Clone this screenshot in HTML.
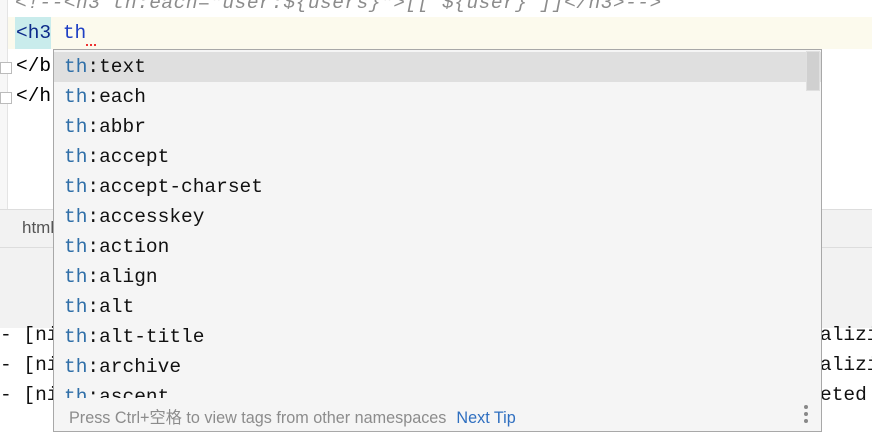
<!DOCTYPE html>
<html><head><style>
body{margin:0;width:872px;height:440px;overflow:hidden;background:#fff;position:relative;font-family:"Liberation Mono",monospace;font-size:19.5px}
.abs{position:absolute;white-space:pre}
.fold{position:absolute;left:0;width:12px;height:12px;border:1px solid #bbb;background:#fff;box-sizing:border-box}
.item{height:30px;line-height:30px;padding-left:10px;color:#111;white-space:nowrap}
.item b{font-weight:normal;color:#2f6fa8}
</style></head><body>
<div class="abs" style="left:0;top:0;width:7px;height:210px;border-right:1px solid #e4e4e4;background:#f7f7f7"></div>
<div class="abs" style="left:15px;top:-12px;line-height:30px;color:#8c8c8c;font-style:italic;letter-spacing:0.5px">&lt;!--&lt;h3 th:each="user:${users}"&gt;[[ ${user} ]]&lt;/h3&gt;--&gt;</div>
<div class="abs" style="left:8px;top:17px;width:864px;height:32px;background:#fcfaed"></div>
<div class="abs" style="left:15px;top:17px;width:36px;height:32px;background:#c9ecec"></div>
<div class="abs" style="left:16px;top:17px;line-height:32px;color:#0c2a8a">&lt;h3 <span style="color:#1e3fc4">th</span></div>
<div class="abs" style="left:86px;top:40px;width:10px;height:4px;border-bottom:2px dotted #e33"></div>
<div class="fold" style="top:62px"></div>
<div class="fold" style="top:92px"></div>
<div class="abs" style="left:16px;top:51px;line-height:30px;color:#000">&lt;/b</div>
<div class="abs" style="left:16px;top:81px;line-height:30px;color:#000">&lt;/h</div>
<div class="abs" style="left:0;top:209px;width:872px;height:37px;background:#f2f2f2;border-top:1px solid #ddd;border-bottom:1px solid #ddd"></div>
<div class="abs" style="left:22px;top:218px;font-family:'Liberation Sans',sans-serif;font-size:17px;color:#555">html</div>
<div class="abs" style="left:0;top:248px;width:872px;height:80px;background:#f2f2f2"></div>
<div class="abs" style="left:0;top:320px;line-height:30px;color:#111">- [ni</div>
<div class="abs" style="left:0;top:350px;line-height:30px;color:#111">- [ni</div>
<div class="abs" style="left:0;top:380px;line-height:30px;color:#111">- [ni</div>
<div class="abs" style="left:820px;top:320px;line-height:30px;color:#111">alizi</div>
<div class="abs" style="left:820px;top:350px;line-height:30px;color:#111">alizi</div>
<div class="abs" style="left:820px;top:380px;line-height:30px;color:#111">eted</div>
<div style="position:absolute;left:53px;top:49px;width:769px;height:383px;background:#f5f5f5;border:1px solid #a8a8a8;box-sizing:border-box;overflow:hidden"><div style="height:346px;overflow:hidden;padding-top:2px"><div class="item" style="background:#dfdfdf"><b>th</b>:text</div><div class="item"><b>th</b>:each</div><div class="item"><b>th</b>:abbr</div><div class="item"><b>th</b>:accept</div><div class="item"><b>th</b>:accept-charset</div><div class="item"><b>th</b>:accesskey</div><div class="item"><b>th</b>:action</div><div class="item"><b>th</b>:align</div><div class="item"><b>th</b>:alt</div><div class="item"><b>th</b>:alt-title</div><div class="item"><b>th</b>:archive</div><div class="item"><b>th</b>:ascent</div></div>
 <div class="abs" style="left:752px;top:1px;width:14px;height:40px;background:#d0d0d0;border:1px solid #e0e0e0;box-sizing:border-box"></div>
 <div class="abs" style="left:15px;top:354px;font-family:'Liberation Sans','Noto Sans CJK SC',sans-serif;font-size:16.2px;color:#8c8c8c">Press Ctrl+空格 to view tags from other namespaces<span style="color:#2f6fc0;margin-left:10px">Next Tip</span></div>
 <div class="abs" style="left:750px;top:355px;width:4px;line-height:0;white-space:normal"><div style="width:4px;height:4px;border-radius:2px;background:#888;margin-bottom:3px"></div><div style="width:4px;height:4px;border-radius:2px;background:#888;margin-bottom:3px"></div><div style="width:4px;height:4px;border-radius:2px;background:#888"></div></div>
</div>
</body></html>
